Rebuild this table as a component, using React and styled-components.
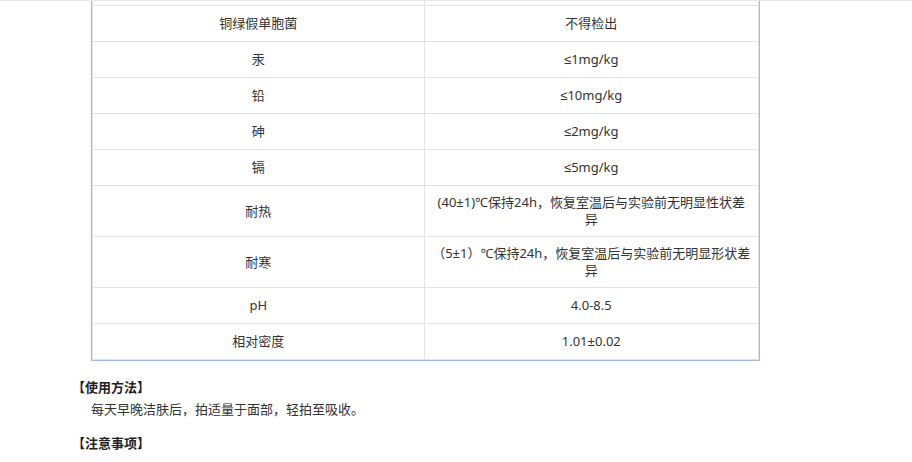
import React from "react";
import styled, { createGlobalStyle } from "styled-components";

const Global = createGlobalStyle`
  html, body { margin: 0; padding: 0; background: #fff; }
  body {
    font-family: "Noto Sans", "Liberation Sans", "Noto Sans CJK SC", sans-serif;
    color: #333;
    font-size: 13px;
  }
`;

const Page = styled.div`
  width: 912px;
  height: 462px;
  overflow: hidden;
  border-top: 1px solid #e6e7f5;
  box-sizing: border-box;
`;

const Content = styled.div`
  width: 706px;
  padding-left: 72px;
`;

const Table = styled.table`
  width: 669px;
  margin: 0 auto;
  border-collapse: separate;
  border-spacing: 0;
  border: 1px solid #9dbbe8;
  border-top: none;
  table-layout: fixed;
`;

const Cell = styled.td`
  width: 50%;
  box-sizing: border-box;
  height: ${(p) => (p.$tall ? 51 : 36)}px;
  padding: 0 7px;
  text-align: center;
  vertical-align: middle;
  line-height: 17px;
  font-size: 13px;
  color: #333;
  border-bottom: 1px solid #e3e3e3;
  border-right: 1px solid #e3e3e3;
  &:first-child { border-left: 1px solid #e3e3e3; }
`;

const StubRow = styled.tr`
  & > td { height: 5px; padding: 0; }
`;

const Section = styled.div`
  margin-top: ${(p) => p.$top}px;
`;

const Heading = styled.div`
  font-weight: bold;
  font-size: 13px;
  line-height: 22px;
  color: #222;
`;

const Paragraph = styled.p`
  margin: 0;
  padding-left: 19px;
  font-size: 13px;
  line-height: 22px;
  color: #333;
`;

const rows = [
  ["铜绿假单胞菌", "不得检出"],
  ["汞", "≤1mg/kg"],
  ["铅", "≤10mg/kg"],
  ["砷", "≤2mg/kg"],
  ["镉", "≤5mg/kg"],
  ["耐热", "(40±1)℃保持24h，恢复室温后与实验前无明显性状差异", true],
  ["耐寒", "（5±1）℃保持24h，恢复室温后与实验前无明显形状差异", true],
  ["pH", "4.0-8.5"],
  ["相对密度", "1.01±0.02"],
];

export default function App() {
  return (
    <>
      <Global />
      <Page>
        <Content>
          <Table>
            <tbody>
              <StubRow>
                <Cell />
                <Cell />
              </StubRow>
              {rows.map(([k, v, tall]) => (
                <tr key={k}>
                  <Cell $tall={tall}>{k}</Cell>
                  <Cell $tall={tall}>{v}</Cell>
                </tr>
              ))}
            </tbody>
          </Table>
          <Section $top={15}>
            <Heading>【使用方法】</Heading>
            <Paragraph>每天早晚洁肤后，拍适量于面部，轻拍至吸收。</Paragraph>
          </Section>
          <Section $top={12}>
            <Heading>【注意事项】</Heading>
          </Section>
        </Content>
      </Page>
    </>
  );
}
